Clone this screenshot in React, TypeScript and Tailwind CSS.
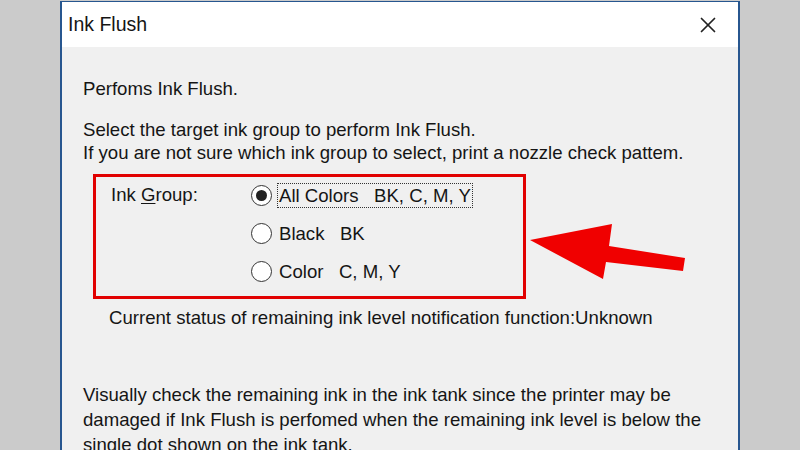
import { X } from 'lucide-react'

const FONT = { fontFamily: '"Liberation Sans", Arial, sans-serif' }

const OPTIONS = [
  { label: 'All Colors', code: 'BK, C, M, Y', checked: true },
  { label: 'Black', code: 'BK', checked: false },
  { label: 'Color', code: 'C, M, Y', checked: false },
]

function Radio({ checked }: { checked: boolean }) {
  return (
    <span className="w-[21px] h-[21px] rounded-full border-[1.5px] border-[#333] bg-white flex items-center justify-center shrink-0">
      {checked && <span className="w-[11px] h-[11px] rounded-full bg-[#222]" />}
    </span>
  )
}

export default function App() {
  return (
    <div className="relative w-[800px] h-[450px] overflow-hidden bg-[#cbcbcb] text-[#151515]" style={FONT}>
      <div className="ml-[60px] mt-[1px] w-[680px] h-[460px] border-x-2 border-t border-[#27568f] bg-[#f0f0f0]">
        {/* title bar */}
        <div className="h-[45px] bg-white flex items-center justify-between pl-[6px] pr-[17px]">
          <span className="text-[19.5px]">Ink Flush</span>
          <X size={26} strokeWidth={1.6} className="text-[#222]" />
        </div>

        <div className="pl-[21px] text-[18.6px] leading-[23px]">
          <p className="mt-[30px]">Perfoms Ink Flush.</p>
          <p className="mt-[18px]">
            Select the target ink group to perform Ink Flush.
            <br />
            If you are not sure which ink group to select, print a nozzle check pattem.
          </p>

          <div className="mt-[10px] ml-[10px] w-[433px] h-[125px] border-[3px] border-[#e10000] flex pt-[6px]">
            <span className="ml-[15px] w-[140px]">
              Ink <span className="underline underline-offset-2">G</span>roup:
            </span>
            <div className="flex flex-col gap-[13px]">
              {OPTIONS.map((o) => (
                <div key={o.label} className="flex items-center gap-[6px] h-[25px]">
                  <Radio checked={o.checked} />
                  <span
                    className={`whitespace-pre px-[1px] ${
                      o.checked ? 'outline outline-1 outline-dotted outline-[#333]' : ''
                    }`}
                  >
                    {o.label}   {o.code}
                  </span>
                </div>
              ))}
            </div>
          </div>

          <p className="mt-[7px] ml-[26px]">Current status of remaining ink level notification function:Unknown</p>

          <p className="mt-[53px] leading-[25px] w-[650px]">
            Visually check the remaining ink in the ink tank since the printer may be
            <br />
            damaged if Ink Flush is perfomed when the remaining ink level is below the
            <br />
            single dot shown on the ink tank.
          </p>
        </div>
      </div>

      <svg className="absolute left-0 top-0" width="800" height="450" viewBox="0 0 800 450">
        <polygon points="530,240 612,224 609,246 685,258 683,271 606,262 603,279" fill="#f00000" />
      </svg>
    </div>
  )
}
